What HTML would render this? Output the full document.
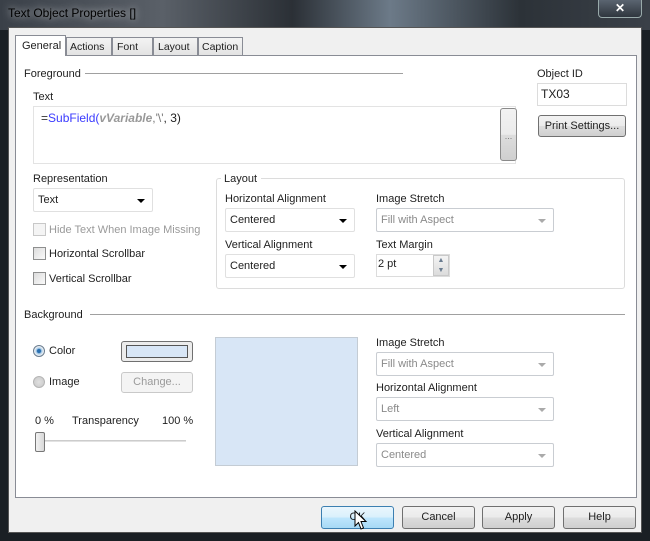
<!DOCTYPE html>
<html><head><style>
*{box-sizing:border-box;margin:0;padding:0}
body{width:650px;height:541px;overflow:hidden;background:#1a1f24;font-family:"Liberation Sans",sans-serif;font-size:11px;color:#1e1e1e;position:relative}
.a{position:absolute}
.t{position:absolute;white-space:nowrap;line-height:14px}
.sel{position:absolute;background:#fff;border:1px solid #bfc4ca;border-radius:2px;padding:5px 4px;line-height:13px}
.sel.d{color:#8a8a8a;border-color:#c9cdd2}
.arr{position:absolute;right:7px;top:10px;width:0;height:0;border-left:4px solid transparent;border-right:4px solid transparent;border-top:4px solid #000}
.d .arr{border-top-color:#aaa}
.btn{position:absolute;border:1px solid #707070;border-radius:3px;background:linear-gradient(#f2f2f2,#ebebeb 50%,#dddddd 51%,#cfcfcf);text-align:center;line-height:20px}
.cb{position:absolute;width:13px;height:13px;border:1px solid #8e8f8f;background:linear-gradient(135deg,#dcdcdc,#fafafa)}
</style></head><body>
<div class="a" style="left:0;top:0;width:650px;height:30px;background:linear-gradient(90deg,#3a4048,#5a6068 25%,#2b3036 45%,#6c7a88 60%,#2c3238 80%,#3a4048)"></div>
<div class="t" style="left:8px;top:6px;font-size:12px;color:#000;text-shadow:0 0 8px rgba(255,255,255,.8)">Text Object Properties []</div>
<div class="a" style="left:598px;top:0;width:44px;height:18px;border:1px solid #9aa;border-top:none;border-radius:0 0 4px 4px;background:linear-gradient(#5a6470,#2f363e);color:#fff;text-align:center;font-weight:bold;font-size:12px;line-height:17px">✕</div>
<div class="a" style="left:8px;top:27px;width:634px;height:506px;background:#f0f0f0;border:1px solid #555"></div>
<div class="a" style="left:15px;top:55px;width:622px;height:443px;background:#fff;border:1px solid #898c95"></div>
<div class="a" style="left:15px;top:35px;width:51px;height:21px;background:#fff;border:1px solid #898c95;border-bottom:none"></div>
<div class="t" style="left:22px;top:39px">General</div>
<div class="a" style="left:66px;top:37px;width:46px;height:18px;border:1px solid #898c95;border-bottom:none;background:linear-gradient(#f3f3f3,#e3e3e3)"></div><div class="t" style="left:70px;top:40px;font-size:10.5px">Actions</div>
<div class="a" style="left:112px;top:37px;width:41px;height:18px;border:1px solid #898c95;border-bottom:none;background:linear-gradient(#f3f3f3,#e3e3e3)"></div><div class="t" style="left:117px;top:40px;font-size:10.5px">Font</div>
<div class="a" style="left:153px;top:37px;width:45px;height:18px;border:1px solid #898c95;border-bottom:none;background:linear-gradient(#f3f3f3,#e3e3e3)"></div><div class="t" style="left:158px;top:40px;font-size:10.5px">Layout</div>
<div class="a" style="left:198px;top:37px;width:45px;height:18px;border:1px solid #898c95;border-bottom:none;background:linear-gradient(#f3f3f3,#e3e3e3)"></div><div class="t" style="left:202px;top:40px;font-size:10.5px">Caption</div>
<div class="t" style="left:24px;top:67px">Foreground</div>
<div class="a" style="left:85px;top:73px;width:318px;height:1px;background:#a0a0a0"></div>
<div class="t" style="left:33px;top:90px">Text</div>
<div class="a" style="left:33px;top:106px;width:483px;height:58px;border:1px solid #e3e3e3;background:#fff"></div>
<div class="t" style="left:41px;top:111px;font-size:12px"><span style="color:#333">=</span><span style="color:#3a3aff">SubField(</span><i style="color:#999;font-weight:bold">vVariable</i><span style="color:#777">,'\'</span>, 3)</div>
<div class="btn" style="left:500px;top:108px;width:17px;height:53px;border-color:#8a8a8a;line-height:55px;font-size:9px;color:#777">...</div>
<div class="t" style="left:537px;top:67px">Object ID</div>
<div class="a" style="left:537px;top:83px;width:90px;height:23px;border:1px solid #dcdcdc;background:#fff"></div>
<div class="t" style="left:541px;top:87px;font-size:12px">TX03</div>
<div class="btn" style="left:538px;top:115px;width:88px;height:22px">Print Settings...</div>
<div class="t" style="left:33px;top:172px">Representation</div>
<div class="sel" style="left:33px;top:188px;width:120px;height:24px;border-color:#e0e0e0">Text<div class="arr"></div></div>
<div class="cb" style="left:33px;top:223px;border-color:#c8c8c8;background:#f4f4f4"></div><div class="t" style="left:49px;top:223px;color:#9a9a9a">Hide Text When Image Missing</div>
<div class="cb" style="left:33px;top:247px"></div><div class="t" style="left:49px;top:247px">Horizontal Scrollbar</div>
<div class="cb" style="left:33px;top:272px"></div><div class="t" style="left:49px;top:272px">Vertical Scrollbar</div>
<div class="a" style="left:216px;top:178px;width:409px;height:111px;border:1px solid #dcdcdc;border-radius:3px"></div>
<div class="a" style="left:221px;top:172px;width:40px;height:14px;background:#fff"></div>
<div class="t" style="left:224px;top:172px">Layout</div>
<div class="t" style="left:225px;top:192px">Horizontal Alignment</div>
<div class="sel" style="left:225px;top:208px;width:130px;height:24px;border-color:#e0e0e0">Centered<div class="arr"></div></div>
<div class="t" style="left:225px;top:238px">Vertical Alignment</div>
<div class="sel" style="left:225px;top:254px;width:130px;height:24px;border-color:#e0e0e0">Centered<div class="arr"></div></div>
<div class="t" style="left:376px;top:192px">Image Stretch</div>
<div class="sel d" style="left:376px;top:208px;width:178px;height:24px">Fill with Aspect<div class="arr"></div></div>
<div class="t" style="left:376px;top:238px">Text Margin</div>
<div class="a" style="left:376px;top:254px;width:74px;height:23px;border:1px solid #dcdcdc;background:#fff"></div>
<div class="t" style="left:378px;top:257px">2 pt</div>
<div class="a" style="left:433px;top:255px;width:16px;height:21px;background:linear-gradient(#f4f4f4,#dcdcdc);border:1px solid #c9c9c9;font-size:7px;color:#6a7c90;text-align:center;line-height:10px">▲<br>▼</div>
<div class="t" style="left:24px;top:308px">Background</div>
<div class="a" style="left:90px;top:314px;width:535px;height:1px;background:#a0a0a0"></div>
<div class="a" style="left:33px;top:345px;width:12px;height:12px;border-radius:50%;border:1px solid #6b7d8f;background:radial-gradient(#2a6fb0 25%,#9cc4e4 35%,#e8eef4 60%)"></div>
<div class="t" style="left:49px;top:344px">Color</div>
<div class="a" style="left:121px;top:341px;width:72px;height:21px;border:1px solid #707070;border-radius:3px;background:#ececec;padding:3px 4px"><div style="width:100%;height:100%;background:#d8e6f6;border:1px solid #555"></div></div>
<div class="a" style="left:33px;top:376px;width:12px;height:12px;border-radius:50%;border:1px solid #b5b5b5;background:radial-gradient(#e0e0e0,#c8c8c8)"></div>
<div class="t" style="left:49px;top:375px">Image</div>
<div class="a" style="left:121px;top:372px;width:72px;height:21px;border:1px solid #c9c9c9;border-radius:3px;background:#f4f4f4;color:#9a9a9a;text-align:center;line-height:19px">Change...</div>
<div class="t" style="left:35px;top:414px">0 %</div>
<div class="t" style="left:72px;top:414px">Transparency</div>
<div class="t" style="left:162px;top:414px">100 %</div>
<div class="a" style="left:40px;top:440px;width:146px;height:2px;background:#e2e2e2;border-top:1px solid #ccc"></div>
<div class="a" style="left:35px;top:432px;width:10px;height:20px;border:1px solid #777;border-radius:2px;background:linear-gradient(90deg,#f2f2f2,#d8d8d8)"></div>
<div class="a" style="left:215px;top:337px;width:143px;height:129px;background:#d8e6f6;border:1px solid #c4ccd4"></div>
<div class="t" style="left:376px;top:336px">Image Stretch</div>
<div class="sel d" style="left:376px;top:352px;width:178px;height:24px">Fill with Aspect<div class="arr"></div></div>
<div class="t" style="left:376px;top:381px">Horizontal Alignment</div>
<div class="sel d" style="left:376px;top:397px;width:178px;height:24px">Left<div class="arr"></div></div>
<div class="t" style="left:376px;top:427px">Vertical Alignment</div>
<div class="sel d" style="left:376px;top:443px;width:178px;height:24px">Centered<div class="arr"></div></div>
<div class="btn" style="left:321px;top:506px;width:73px;height:23px;border-color:#3c7fb1;background:linear-gradient(#eaf6fd,#d9f0fc 50%,#bee6fd 51%,#a7d9f5)">OK</div>
<div class="btn" style="left:402px;top:506px;width:73px;height:23px">Cancel</div>
<div class="btn" style="left:482px;top:506px;width:73px;height:23px">Apply</div>
<div class="btn" style="left:563px;top:506px;width:73px;height:23px">Help</div>
<svg class="a" style="left:354px;top:510px" width="14" height="22" viewBox="0 0 14 22"><path d="M1 1 L1 16 L4.5 12.5 L7 19 L9.5 18 L7 11.5 L12 11.5 Z" fill="#fff" stroke="#000" stroke-width="1"/></svg>
</body></html>
